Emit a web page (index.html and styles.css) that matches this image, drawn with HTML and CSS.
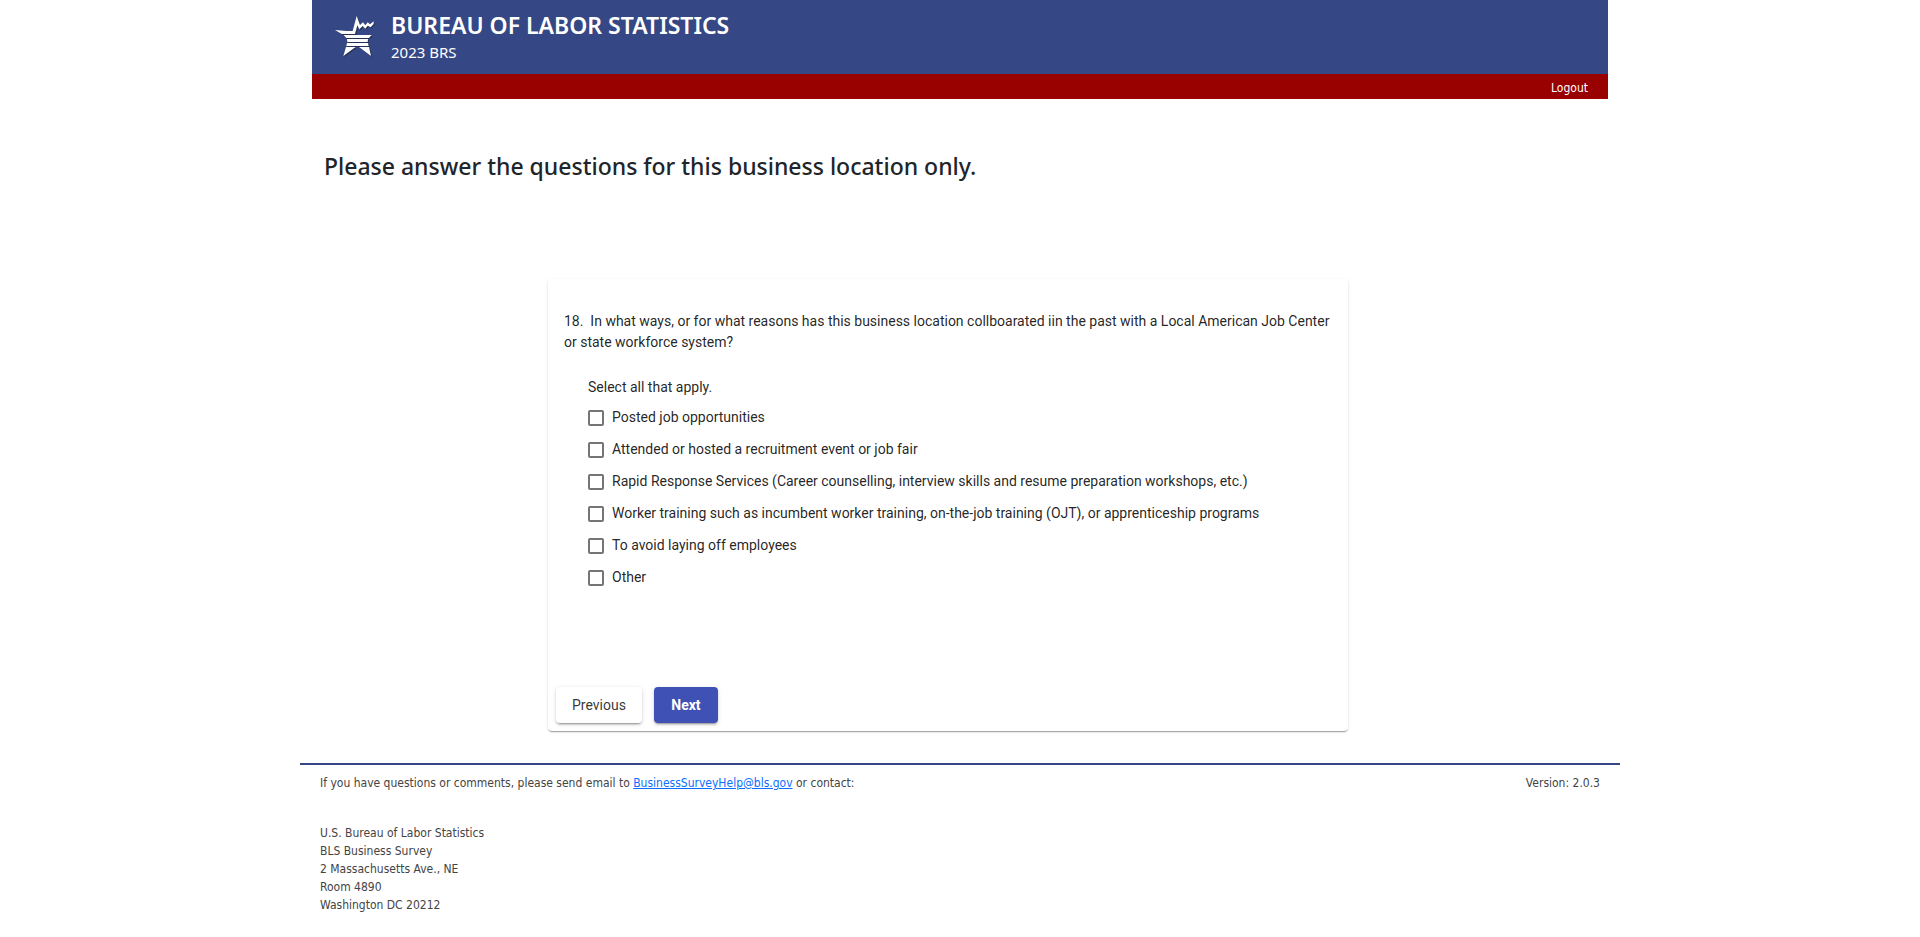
FILE: index.html
```html
<!DOCTYPE html>
<html lang="en">
<head>
<meta charset="utf-8">
<meta name="viewport" content="width=device-width, initial-scale=1">
<title>2023 BRS</title>
<link rel="stylesheet" href="styles.css">
</head>
<body>
<div class="container">
  <header class="header">
    <div class="brand">
      <svg class="logo" viewBox="25 15 126 129" aria-hidden="true">
        <g class="logo-shadow">
          <path d="M28 60 62 63H81L93 18 103 45 112 37 119 46 126 37 133 43 144 34V42L135 52 126 47 119 56 111 48 101 58 95 46 88 72H48Z"/>
          <path d="M54 75H138L130 84H62ZM64 87H127L126 96H65ZM64 99H127L129 108H62ZM61 111H90L53 138ZM100 111H130L136 138Z"/>
        </g>
        <path class="logo-star" d="M28 60 62 63H81L93 18 103 45 112 37 119 46 126 37 133 43 144 34V42L135 52 126 47 119 56 111 48 101 58 95 46 88 72H48Z"/>
        <path class="logo-star" d="M54 75H138L130 84H62ZM64 87H127L126 96H65ZM64 99H127L129 108H62ZM61 111H90L53 138ZM100 111H130L136 138Z"/>
      </svg>
      <div>
        <div class="agency">BUREAU OF LABOR STATISTICS</div>
        <div class="survey">2023 BRS</div>
      </div>
    </div>
    <nav class="bar"><a class="logout" href="#">Logout</a></nav>
  </header>
  <h1 class="notice">Please answer the questions for this business location only.</h1>
  <main>
    <form class="card">
      <p class="question">18.&nbsp; In what ways, or for what reasons has this business location collboarated iin the past with a Local American Job Center or state workforce system?</p>
      <fieldset class="options">
        <legend class="hint">Select all that apply.</legend>
        <label class="option"><input class="check" type="checkbox">Posted job opportunities</label>
        <label class="option"><input class="check" type="checkbox">Attended or hosted a recruitment event or job fair</label>
        <label class="option"><input class="check" type="checkbox">Rapid Response Services (Career counselling, interview skills and resume preparation workshops, etc.)</label>
        <label class="option"><input class="check" type="checkbox">Worker training such as incumbent worker training, on-the-job training (OJT), or apprenticeship programs</label>
        <label class="option"><input class="check" type="checkbox">To avoid laying off employees</label>
        <label class="option"><input class="check" type="checkbox">Other</label>
      </fieldset>
      <div class="actions">
        <button class="button" type="button">Previous</button>
        <button class="button primary" type="button">Next</button>
      </div>
    </form>
  </main>
  <footer class="footer">
    <div class="contact">
      <span>If you have questions or comments, please send email to <a class="mail" href="mailto:BusinessSurveyHelp@bls.gov">BusinessSurveyHelp@bls.gov</a> or contact:</span>
      <span>Version: 2.0.3</span>
    </div>
    <address class="address">U.S. Bureau of Labor Statistics<br>BLS Business Survey<br>2 Massachusetts Ave., NE<br>Room 4890<br>Washington DC 20212</address>
  </footer>
</div>
</body>
</html>
```
FILE: styles.css
```css
* { box-sizing: border-box; }
body {
  margin: 0;
  background: #fff;
  color: #212529;
  font-family: "Segoe UI", "Noto Sans", sans-serif;
}
.container { max-width: 1320px; margin: 0 auto; }
.header { margin: 0 12px; color: #fff; }
.brand {
  display: flex;
  gap: 15px;
  padding: 10px 20px 11px 22px;
  background: #364785;
}
.logo { width: 42px; height: 43px; margin-top: 5px; }
.logo-star { fill: #fff; }
.logo-shadow { fill: #1b2233; opacity: 0.6; transform: translate(3px, 3px); }
.agency { font-size: 23px; font-weight: 600; line-height: 31px; }
.survey { font-size: 15px; line-height: 22px; }
.bar {
  display: flex;
  justify-content: flex-end;
  padding: 5px 20px 2px;
  background: #900;
}
.logout {
  color: #fff;
  font-family: Tahoma, "DejaVu Sans Condensed", sans-serif;
  font-size: 12px;
  line-height: 18px;
  text-decoration: none;
}
.notice {
  margin: 52px 24px 97px;
  font-size: 23px;
  font-weight: 500;
  line-height: 31px;
}
.card {
  max-width: 800px;
  margin: 0 124px 32px 248px;
  padding: 32px 8px 8px;
  border-radius: 4px;
  box-shadow: 0 2px 1px -1px rgba(0,0,0,.2), 0 1px 1px rgba(0,0,0,.14), 0 1px 3px rgba(0,0,0,.12);
  color: rgba(0,0,0,.87);
  font: 14px/21px Roboto, sans-serif;
}
.question { margin: 0 8px; }
.options { margin: 24px 0 0 32px; padding: 0; border: 0; }
.hint { padding: 0; margin-bottom: 3px; }
.option { display: flex; align-items: center; gap: 8px; height: 32px; }
.check {
  appearance: none;
  flex: none;
  width: 16px;
  height: 16px;
  margin: 2px 0 0;
  border: 2px solid #757575;
  border-radius: 2px;
}
.check:checked { background: #3f51b5; border-color: #3f51b5; }
.actions { display: flex; gap: 12px; margin-top: 94px; }
.button {
  min-width: 64px;
  height: 36px;
  padding: 0 16px;
  border: 0;
  border-radius: 4px;
  background: #fff;
  color: rgba(0,0,0,.8);
  font: 14px/36px Roboto, sans-serif;
  box-shadow: 0 3px 1px -2px rgba(0,0,0,.2), 0 2px 2px rgba(0,0,0,.14), 0 1px 5px rgba(0,0,0,.12);
}
.primary { background: #3f51b5; color: #fff; font-weight: 700; }
.footer {
  padding: 9px 20px 24px;
  border-top: 2px solid #364785;
  color: #444;
  font: 12px/18px Tahoma, "DejaVu Sans Condensed", sans-serif;
}
.contact { display: flex; justify-content: space-between; gap: 24px; }
.mail { color: #0d6efd; }
.address { margin-top: 32px; font-style: normal; }
```
